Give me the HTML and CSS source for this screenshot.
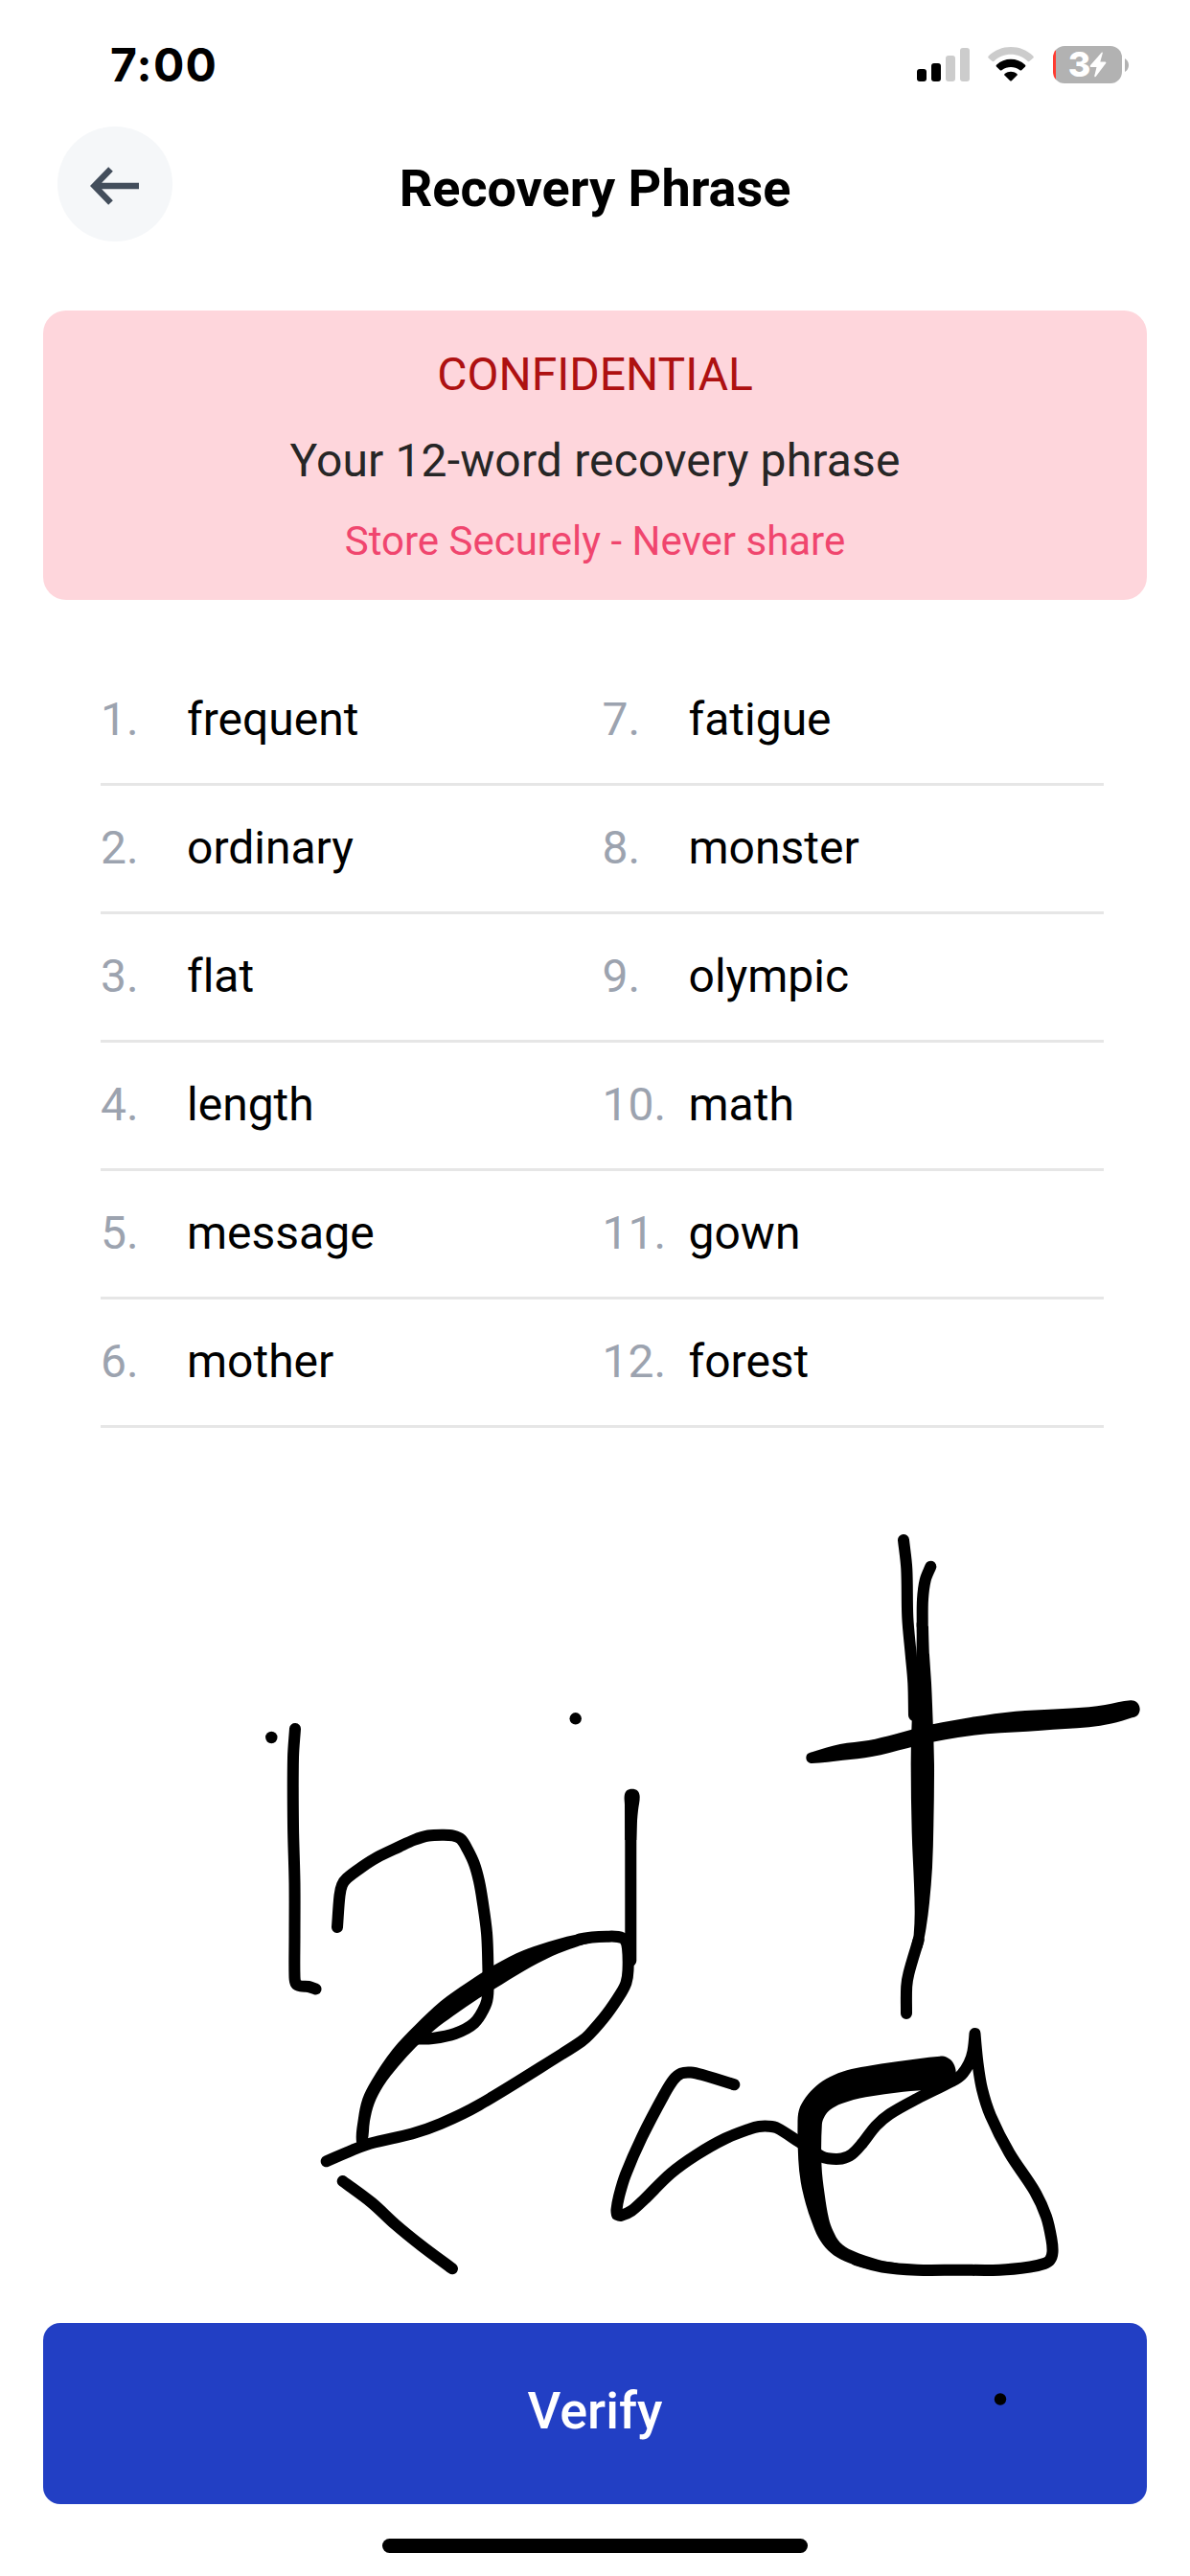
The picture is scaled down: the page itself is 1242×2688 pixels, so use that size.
FILE: index.html
```html
<!DOCTYPE html>
<html lang="en">
<head>
<meta charset="utf-8">
<title>Recovery Phrase</title>
<link rel="stylesheet" href="styles.css">
</head>
<body>
<div class="screen">
  <div class="status">
    <span class="time">7:00</span>
    <div class="indicators">
      <svg class="signal" viewBox="0 0 55 35">
        <rect x="0" y="22" width="10" height="13" rx="3"/>
        <rect x="15" y="16" width="10" height="19" rx="3"/>
        <rect class="dim" x="30" y="8" width="10" height="27" rx="3"/>
        <rect class="dim" x="45" y="0" width="10" height="35" rx="3"/>
      </svg>
      <svg class="wifi" viewBox="0 0 48 36">
        <path class="dim" d="M0.6 11.4Q-.2 10.5.7 9.6C13-3.2 35-3.2 47.300 9.600Q48.200 10.500 47.400 11.400L43.300 15.100Q42.500 15.600 41.700 14.900C31.500 5.500 16.500 5.500 6.300 14.900Q5.500 15.600 4.700 15.100Z"/>
        <path d="M8.900 20.400Q8.200 19.500 9 18.700C17.500 10.800 30.500 10.800 39 18.700Q39.800 19.500 39.100 20.400L35.200 24.200Q34.400 24.900 33.500 24.200C27.500 19.800 20.500 19.800 14.500 24.200Q13.600 24.900 12.800 24.200Z"/>
        <path d="M17.400 29.400Q16.800 28.600 17.600 27.900C21.500 24.900 26.500 24.900 30.400 27.900Q31.200 28.600 30.600 29.400L24.800 35.200Q24 35.900 23.200 35.200Z"/>
      </svg>
      <div class="battery">
        <span class="level">3</span>
        <svg class="bolt" viewBox="0 0 18 27"><path d="M13 .5Q14 .2 13.800 1.500L11.300 10.500H16.500Q18 10.600 17.200 12L6.800 25.700Q5 27 5.300 25L7.500 16H1.600Q0 15.800.9 14.300Z"/></svg>
      </div>
      <svg class="nub" viewBox="0 0 4 14"><path d="M0 0Q4 2.500 4 7T0 14Z"/></svg>
    </div>
  </div>

  <header class="header">
    <button class="back" aria-label="Back">
      <svg viewBox="0 0 52 40"><path d="M51 20H5M21.500 2.500L4.500 20L21.500 37.500"/></svg>
    </button>
    <h1 class="title">Recovery Phrase</h1>
  </header>

  <section class="notice">
    <p class="notice-tag">CONFIDENTIAL</p>
    <p class="notice-text">Your 12-word recovery phrase</p>
    <p class="notice-hint">Store Securely - Never share</p>
  </section>

  <div class="words">
    <div class="row"><span class="num">1.</span><span>frequent</span><span class="num">7.</span><span>fatigue</span></div>
    <div class="row"><span class="num">2.</span><span>ordinary</span><span class="num">8.</span><span>monster</span></div>
    <div class="row"><span class="num">3.</span><span>flat</span><span class="num">9.</span><span>olympic</span></div>
    <div class="row"><span class="num">4.</span><span>length</span><span class="num">10.</span><span>math</span></div>
    <div class="row"><span class="num">5.</span><span>message</span><span class="num">11.</span><span>gown</span></div>
    <div class="row"><span class="num">6.</span><span>mother</span><span class="num">12.</span><span>forest</span></div>
  </div>

  <button class="verify">Verify</button>
  <div class="home"></div>

  <svg class="ink" viewBox="0 0 1242 2688">
    <circle cx="283.300" cy="1813" r="6.200"/>
    <circle cx="600.700" cy="1793.300" r="6.200"/>
    <circle cx="1044" cy="2503.500" r="6.200"/>
    <path class="stroke" data-points="308,1804 306,1834 306,1905 307.500,1965 307.500,2020 307.500,2063 309,2070 314,2072.500 322,2073 329.500,2075.500"/>
    <path class="stroke" data-points="352,2011 354.500,1978 357,1967 362,1960 378,1948 393.300,1938.300 416.700,1927 432,1920 447,1915.500 463,1914.700 473,1915.500 481,1919 488,1930 495,1945 500,1963 503.500,1983 508,2017 509.300,2050 509.300,2080 506.500,2093 495,2111 475,2122 451.500,2127 435,2127.500"/>
    <path class="stroke" data-points="605,2023.500 618,2021.500 633,2020.700 645,2021 652,2024 655,2033 655.500,2056 653.500,2069 648,2080 633,2102 615,2123 607,2130 587,2143 500,2196.500 460,2216 430,2226.500 387,2236.500 368,2243.500 340.700,2255.300"/>
    <path class="stroke" data-points="658.500,1876 658.300,1920 658.300,1980 658.300,2046"/>
    <path class="fill" data-points="652,1883 651.700,1874 654,1868.500 659.700,1866.700 665.500,1868.700 667.700,1875 666,1889 665,1900 664.300,1920 652.300,1920"/>
    <path class="stroke" data-points="357.700,2276 388,2298.500 413,2321.500 440,2343.500 472,2367.300"/>
    <path class="stroke" data-points="766.300,2175.300 733,2165 721,2162.500 711,2163.500 703,2170 693,2186 670,2230 653,2269 646,2292 643.500,2306 644,2311 648,2312 659,2307 672,2295.500 700,2268 727,2248.500 757,2231.500 783,2221.300 792,2219 802,2218.700 811,2220.500 834,2235 857,2250 864,2252.300 878.500,2252.500 889,2248 900,2236.500 914,2218.500 928.600,2206 957,2190 993,2172 1003.500,2165 1011.400,2153 1015.400,2141 1017.500,2122 1020.500,2153 1025,2180 1034,2208 1053.600,2246.700 1080,2286.700 1092,2313 1097.500,2337 1098.500,2350 1096,2358 1090,2362 1075,2365.500 1043,2368.700 1000,2368.700 957,2368.700 921,2365.500 893,2358"/>
    <path class="stroke" data-points="943,1607 946.300,1637 947.300,1687.600 950.700,1726.500 953.300,1756 954,1790"/>
    <path class="stroke" data-points="971.300,1634.700 965.700,1648.800 963,1669 962.700,1697"/>
    <path class="stroke" data-points="958.700,2024.300 948.500,2059 946.200,2073 946,2101"/>
    <path class="fill" transform="translate(300 1980) scale(.33333)" data-points="216,765 222,690 235,630 262,575 330,475 400,400 480,325 560,268 650,210 740,165 840,132 910,115 950,110 950,142 910,153 830,183 740,230 650,285 600,315 520,370 460,415 400,470 350,525 300,590 272,645 258,700 250,765 233,782"/>
    <path class="fill" transform="translate(800 1560) scale(.33333 .36995)" data-points="470,360 469,455 455,640 452,760 455,950 462,1100 464,1180 461,1240 455,1265 488,1278 500,1220 510,1150 519,1050 523,930 525,760 521,640 516,530 510,450 507,370"/>
    <path class="fill" transform="translate(800 1560) scale(.33333 .36995)" data-points="142,725 230,703 320,692 400,675 520,647 640,627 780,610 900,604 1010,598 1060,592 1140,579 1160,585 1169,604 1162,621 1145,628 1080,645 1010,655 860,664 690,674 600,684 520,697 440,714 330,738 240,748 142,757 129,752 124,741 129,730"/>
    <path class="fill" transform="translate(600 2080) scale(.35714 .33333)" data-points="1067,197 940,214 850,229 795,241 745,262 705,290 675,325 655,365 651,410 653,520 660,590 675,660 692,715 712,765 740,805 775,832 830,855 890,870 950,877 960,860 950,847 890,835 810,805 775,780 755,745 742,705 730,630 721,540 722,410 730,385 745,365 780,345 850,325 960,308 1045,300 1090,285 1110,262 1113,240 1104,215 1088,201"/>
  </svg>
</div>
<script src="ink.js"></script>
</body>
</html>
```
FILE: styles.css
```css
* { box-sizing: border-box; margin: 0; padding: 0; }
body { background: #fff; font-family: Roboto, "Liberation Sans", sans-serif; font-variant-ligatures: none; color: #000; }
button { border: 0; font: inherit; }
.screen { position: relative; width: 1242px; height: 2688px; display: flex; flex-direction: column; overflow: hidden; }

.status { height: 132px; padding: 0 64px 0 115px; display: flex; justify-content: space-between; }
.time { font: 700 48px/58px Inter, sans-serif; letter-spacing: 1.3px; margin-top: 39px; }
.indicators { display: flex; height: 39px; margin-top: 48px; align-items: flex-start; }
.signal { width: 55px; height: 35px; margin-top: 2px; }
.wifi { width: 48px; height: 36px; margin: 1px 20px 0 19px; }
.dim { fill: #ccc; }
.battery { width: 72px; height: 39px; border-radius: 12px; background: linear-gradient(90deg, #ff3b30 3px, #b2b2b2 3px); display: flex; align-items: center; justify-content: center; padding-left: 1px; }
.level { color: #fff; font: 800 36px/39px Inter, sans-serif; width: 20px; display: flex; justify-content: center; }
.bolt { width: 18px; height: 27px; fill: #fff; }
.nub { width: 4px; height: 14px; margin: 13px 0 0 3px; fill: #b2b2b2; }

.header { display: grid; grid-template-columns: 120px 1fr 120px; padding: 0 60px; height: 120px; }
.back { width: 120px; height: 120px; border-radius: 50%; background: #f5f7f9; display: flex; align-items: center; justify-content: center; }
.back svg { width: 52px; height: 40px; margin-top: 3px; fill: none; stroke: #434e5c; stroke-width: 6.5; }
.title { font-size: 54px; font-weight: 700; line-height: 64px; text-align: center; margin-top: 33px; }

.notice { margin: 72px 45px 0; height: 302px; border-radius: 24px; background: #fed6dc; text-align: center; padding-top: 39px; display: flex; flex-direction: column; }
.notice-tag { color: #ae1111; font-size: 48px; line-height: 56px; }
.notice-text { color: #262626; font-size: 48px; line-height: 56px; margin-top: 34px; letter-spacing: .15px; }
.notice-hint { color: #f0466e; font-size: 42px; line-height: 50px; margin-top: 31px; }

.words { margin: 60px 90px 0 105px; }
.row { display: grid; grid-template-columns: 90px 433.5px 90px 1fr; height: 134px; border-bottom: 3px solid #e6e6e6; font-size: 48px; line-height: 56px; padding-top: 37px; }
.num { color: #9ca3af; }

.verify { margin: auto 45px 0; height: 189px; flex: none; border-radius: 18px; background: #223fc4; color: #fff; font-size: 54px; font-weight: 500; padding-bottom: 7px; }
.home { width: 444px; height: 15px; flex: none; margin: 36px auto 24px; border-radius: 8px; background: #000; }

.ink { position: absolute; inset: 0; width: 1242px; height: 2688px; }
.stroke { fill: none; stroke: #000; stroke-width: 12; stroke-linecap: round; stroke-linejoin: round; }
.fill { fill: #000; }
```
FILE: ink.js
```js
// Draws each hand-drawn stroke as a smooth curve through its sample points.
document.querySelectorAll('[data-points]').forEach(function (el) {
  var pts = el.dataset.points.trim().split(/\s+/).map(function (p) { return p.split(',').map(Number); });
  var closed = el.classList.contains('fill');
  var n = pts.length;
  function at(i) { return closed ? pts[(i + n) % n] : pts[Math.max(0, Math.min(n - 1, i))]; }
  // Handles are limited by segment length so uneven sampling does not overshoot;
  // a sharp turn gets no handle and stays a corner.
  function handle(i, len) {
    var a = at(i - 1), c = at(i), b = at(i + 1);
    var ux = c[0] - a[0], uy = c[1] - a[1], vx = b[0] - c[0], vy = b[1] - c[1];
    if (Math.abs(Math.atan2(ux * vy - uy * vx, ux * vx + uy * vy)) > 1) return [0, 0];
    var dx = b[0] - a[0], dy = b[1] - a[1], d = Math.hypot(dx, dy) || 1;
    return [dx / d * len / 3, dy / d * len / 3];
  }
  var d = 'M' + pts[0];
  for (var i = 0; i < (closed ? n : n - 1); i++) {
    var p = at(i), q = at(i + 1), len = Math.hypot(q[0] - p[0], q[1] - p[1]);
    var h = handle(i, len), k = handle(i + 1, len);
    d += 'C' + [p[0] + h[0], p[1] + h[1], q[0] - k[0], q[1] - k[1], q[0], q[1]].join(' ');
  }
  el.setAttribute('d', d + (closed ? 'Z' : ''));
});
```
